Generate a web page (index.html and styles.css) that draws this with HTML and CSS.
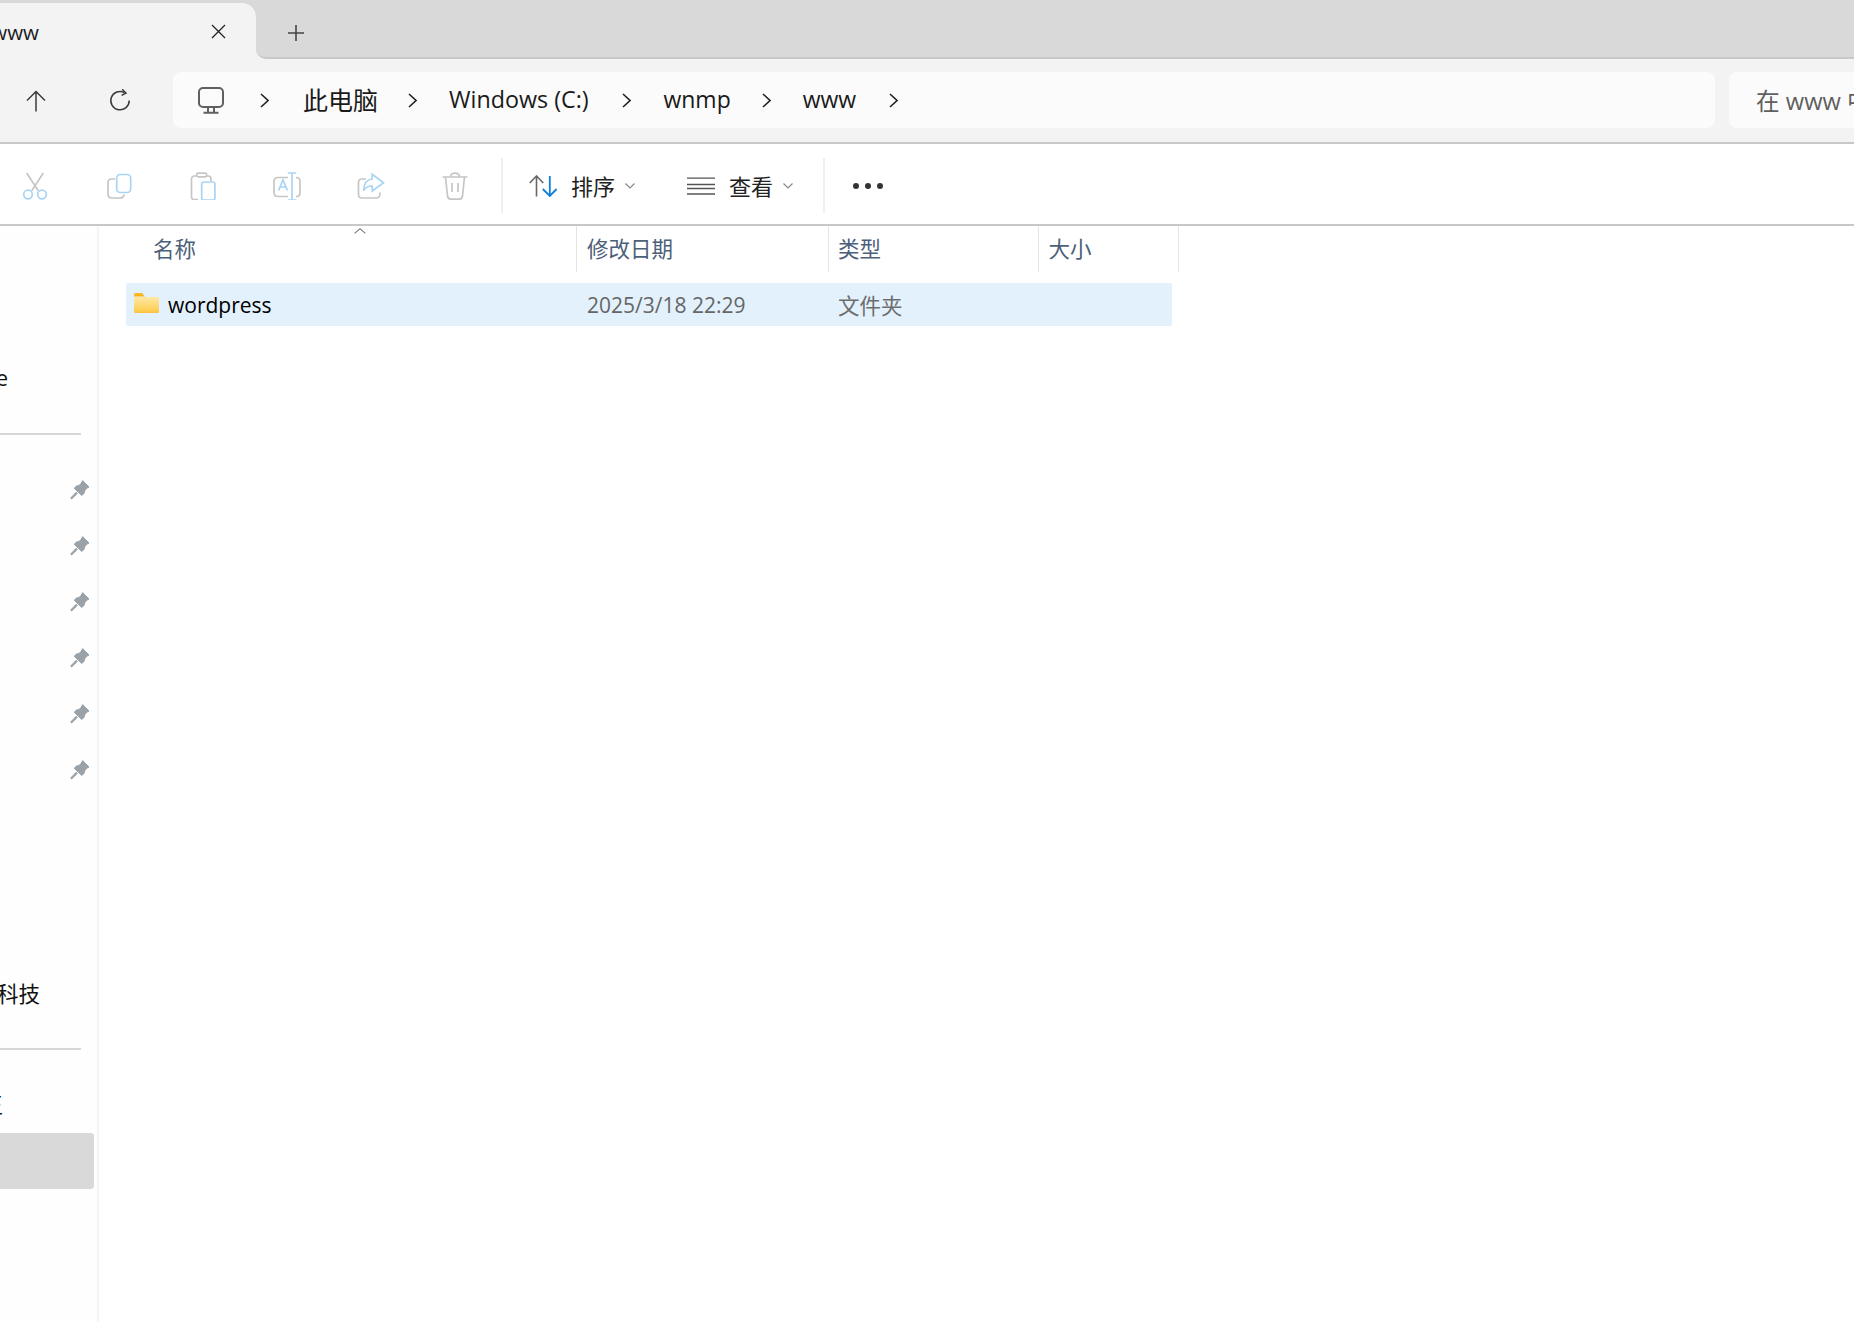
FILE: index.html
```html
<!DOCTYPE html>
<html lang="zh-CN">
<head>
<meta charset="utf-8">
<title>www</title>
<link rel="stylesheet" href="styles.css">
</head>
<body>
<div class="window">
  <div class="tabbar">
    <div class="tab">
      <span class="clip-left tab-title">www</span>
      <svg class="tab-close" width="15" height="15" viewBox="0 0 15 15"><path d="M1 1L14 14M14 1L1 14"/></svg>
    </div>
    <div class="tab-rest">
      <svg class="tab-plus" width="18" height="18" viewBox="0 0 18 18"><path d="M9 1V17M1 9H17"/></svg>
    </div>
  </div>

  <div class="navbar">
    <svg class="nav-up" width="20" height="22" viewBox="0 0 20 22"><path d="M10 21.5V1.5M1 10.5L10 1.5L19 10.5"/></svg>
    <svg class="nav-refresh" width="22" height="24" viewBox="0 0 22 24"><path d="M15.5 4.6A9.2 9.2 0 1 0 20.2 12.5"/><path d="M13.2 1.2L17 5L12.6 7.4" /></svg>
    <div class="address">
      <svg class="pc-icon" width="26" height="27" viewBox="0 0 26 27"><rect x="1" y="1" width="24" height="19" rx="4"/><path d="M10 20V25.5M16 20V25.5M5.5 25.7H20.5"/></svg>
      <svg class="crumb-chev first" width="9" height="15" viewBox="0 0 9 15"><path d="M1 1L8 7.5L1 14"/></svg>
      <span class="crumb c-pc">此电脑</span>
      <svg class="crumb-chev" width="9" height="15" viewBox="0 0 9 15"><path d="M1 1L8 7.5L1 14"/></svg>
      <span class="crumb c-win">Windows (C:)</span>
      <svg class="crumb-chev" width="9" height="15" viewBox="0 0 9 15"><path d="M1 1L8 7.5L1 14"/></svg>
      <span class="crumb c-wnmp">wnmp</span>
      <svg class="crumb-chev" width="9" height="15" viewBox="0 0 9 15"><path d="M1 1L8 7.5L1 14"/></svg>
      <span class="crumb c-www">www</span>
      <svg class="crumb-chev" width="9" height="15" viewBox="0 0 9 15"><path d="M1 1L8 7.5L1 14"/></svg>
    </div>
    <div class="search">在 www 中搜索</div>
  </div>

  <div class="toolbar">
    <button class="tool" aria-label="剪切">
      <svg width="28" height="28" viewBox="0 0 28 28"><path class="g" d="M5.7 1L17.3 18.7M22.3 1L10.7 18.7"/><circle class="b" cx="7" cy="22.5" r="4.3"/><circle class="b" cx="21" cy="22.5" r="4.3"/></svg>
    </button>
    <button class="tool" aria-label="复制">
      <svg width="28" height="28" viewBox="0 0 28 28"><path class="g" d="M10 7H6.5Q3 7 3 11V22Q3 26 7 26H15Q18.5 26 19.2 22.5"/><rect class="b" x="11.7" y="2.5" width="14" height="18" rx="3.5"/></svg>
    </button>
    <button class="tool" aria-label="粘贴">
      <svg width="28" height="28" viewBox="0 0 28 28"><path class="g" d="M7.5 4H5.5Q2.5 4 2.5 7V25Q2.5 27.5 5 27.5H9M18 4H19Q22 4 22 7V9"/><rect class="g" x="7.7" y="1.2" width="10" height="3.6" rx="1.6"/><rect class="b" x="12.7" y="10" width="13.2" height="18" rx="2"/></svg>
    </button>
    <button class="tool" aria-label="重命名">
      <svg width="28" height="28" viewBox="0 0 28 28"><path class="g" d="M15 5.5H5Q1 5.5 1 9.5V20.5Q1 24.5 5 24.5H15M23 5.5H23.5Q27 5.5 27 9.5V20.5Q27 24.5 23.5 24.5H23"/><path class="b" d="M19 1V28M14.7 1H23.3M14.7 28H23.3M5.5 18.5L10 8L14.5 18.5M7 15H13"/></svg>
    </button>
    <button class="tool" aria-label="共享">
      <svg width="28" height="28" viewBox="0 0 28 28"><path class="g" d="M9 7H5Q1.5 7 1.5 10.5V22.5Q1.5 26 5 26H19Q22.5 26 23 22.5V20.5"/><path class="b" d="M6.5 18.7C7 12 10 7.2 15.2 7V2.2L26.5 10.7L15.2 19V14C11 14 8 16 6.5 18.7Z"/></svg>
    </button>
    <button class="tool" aria-label="删除">
      <svg width="28" height="28" viewBox="0 0 28 28"><path class="g" d="M1.5 5H26.5M9.5 5Q9.5 1.2 14 1.2Q18.5 1.2 18.5 5M4.5 5L6.5 24Q7 27.2 10 27.2H18Q21 27.2 21.5 24L23.5 5M11 11V20M17 11V20"/></svg>
    </button>
    <span class="tool-sep"></span>
    <div class="menu menu-sort">
      <svg width="28" height="22" viewBox="0 0 28 22"><path class="ar-g" d="M7.5 21.5V1M.7 8L7.5 1L14.3 8"/><path class="ar-b" d="M20.8 1V21M13.8 14L20.8 21L27.6 14"/></svg>
      <span class="menu-label">排序</span>
      <svg class="menu-chev" width="10" height="6" viewBox="0 0 10 6"><path d="M.5.5L5 5L9.5.5"/></svg>
    </div>
    <div class="menu menu-view">
      <svg width="28" height="18" viewBox="0 0 28 18"><path d="M0 1.2H28M0 7.5H28M0 11.5H28M0 17H28"/></svg>
      <span class="menu-label">查看</span>
      <svg class="menu-chev" width="10" height="6" viewBox="0 0 10 6"><path d="M.5.5L5 5L9.5.5"/></svg>
    </div>
    <span class="tool-sep sep-2"></span>
    <div class="more"><i></i><i></i><i></i></div>
  </div>

  <div class="body">
    <aside class="sidebar">
      <div class="side-row"><span class="clip-left w-e">OneDrive</span></div>
      <div class="side-div"></div>
      <div class="side-row pinned"><svg class="pin" width="20" height="20" viewBox="0 0 20 20"><use href="#pin"/></svg></div>
      <div class="side-row pinned"><svg class="pin" width="20" height="20" viewBox="0 0 20 20"><use href="#pin"/></svg></div>
      <div class="side-row pinned"><svg class="pin" width="20" height="20" viewBox="0 0 20 20"><use href="#pin"/></svg></div>
      <div class="side-row pinned"><svg class="pin" width="20" height="20" viewBox="0 0 20 20"><use href="#pin"/></svg></div>
      <div class="side-row pinned"><svg class="pin" width="20" height="20" viewBox="0 0 20 20"><use href="#pin"/></svg></div>
      <div class="side-row pinned"><svg class="pin" width="20" height="20" viewBox="0 0 20 20"><use href="#pin"/></svg></div>
      <div class="side-row"></div>
      <div class="side-row"></div>
      <div class="side-row"></div>
      <div class="side-row"><span class="clip-left w-tech">科技</span></div>
      <div class="side-div"></div>
      <div class="side-row"><span class="clip-left w-lib">王</span></div>
      <div class="side-row selected"></div>
    </aside>

    <main class="files">
      <div class="head">
        <div class="col col-name">名称<svg class="sort-caret" width="12" height="6" viewBox="0 0 12 6"><path d="M.7 5.3L6 .7L11.3 5.3"/></svg></div>
        <div class="col col-date">修改日期</div>
        <div class="col col-type">类型</div>
        <div class="col col-size">大小</div>
      </div>
      <div class="row">
        <div class="cell-name">
          <svg class="folder" width="25" height="20" viewBox="0 0 25 20">
            <defs><linearGradient id="fg" x1="0" y1="0" x2="0" y2="1"><stop offset="0" stop-color="#ffe8a6"/><stop offset=".75" stop-color="#fdd35f"/><stop offset="1" stop-color="#fbc13a"/></linearGradient></defs>
            <path d="M0 1.5Q0 0 1.5 0H8L11 3.5H0Z" fill="#fab81e"/>
            <path d="M0 4H23.5Q25 4 25 5.5V18.5Q25 20 23.5 20H1.5Q0 20 0 18.5Z" fill="url(#fg)"/>
          </svg>
          <span>wordpress</span>
        </div>
        <div class="cell-date">2025/3/18 22:29</div>
        <div class="cell-type">文件夹</div>
      </div>
    </main>
  </div>

  <svg class="defs" width="0" height="0"><defs><g id="pin"><path d="M12.7 .6L19 7L16.5 8.5L14.5 11L14 13.5L11.7 15.4L4.2 8.2L6.5 6L9 5.5L11.2 3.2Z" fill="#99a2a8" stroke="#99a2a8" stroke-width="1" stroke-linejoin="round"/><path d="M.9 18.7L7 12.6" stroke="#99a2a8" stroke-width="2.2" fill="none"/></g></defs></svg>
</div>
</body>
</html>
```

FILE: styles.css
```css
* { box-sizing: border-box; }
html, body { margin: 0; padding: 0; }
body {
  width: 1854px;
  height: 1322px;
  overflow: hidden;
  background: #fff;
  font-family: "Open Sans", "Noto Sans CJK SC", sans-serif;
  color: #1a1a1a;
}
svg { display: block; flex: none; fill: none; }
.window { width: 1854px; height: 1322px; display: flex; flex-direction: column; overflow: hidden; position: relative; }
.defs { position: absolute; }

.clip-left { display: flex; justify-content: flex-end; white-space: nowrap; flex: none; }

/* tab strip */
.tabbar {
  height: 59px;
  display: flex;
  background: linear-gradient(#d9d9d9 0 48px, #f3f3f3 48px);
  flex: none;
}
.tab {
  width: 256px;
  margin-top: 3px;
  background: #f3f3f3;
  border-top-right-radius: 14px;
  display: flex;
  align-items: center;
  padding-top: 2px;
}
.tab-title { width: 39px; font-size: 20.5px; }
.tab-close { margin-left: 172px; margin-top: -2px; stroke: #222; stroke-width: 1.3; }
.tab-rest {
  flex: 1;
  background: #d9d9d9;
  border-bottom: 2px solid #c8c8c8;
  border-bottom-left-radius: 10px;
  display: flex;
  align-items: center;
}
.tab-plus { margin-left: 31px; stroke: #444; stroke-width: 1.6; margin-top: 9px; }

/* navigation */
.navbar {
  height: 85px;
  flex: none;
  background: #f3f3f3;
  border-bottom: 2px solid #c8c8c8;
  display: flex;
  align-items: center;
  overflow: hidden;
  padding-bottom: 1px;
}
.nav-up { margin-left: 26px; stroke: #3c3c3c; stroke-width: 1.5; margin-top: 2px; }
.nav-refresh { margin-left: 63px; stroke: #3c3c3c; stroke-width: 1.5; }
.address {
  margin-left: 42px;
  width: 1542px;
  height: 56px;
  flex: none;
  background: #fbfbfb;
  border-radius: 8px;
  display: flex;
  align-items: center;
}
.pc-icon { margin-left: 25px; stroke: #606060; stroke-width: 2; margin-top: 1px; }
.crumb-chev { stroke: #222; stroke-width: 1.6; margin-top: 1px; }
.crumb-chev.first { margin-left: 36px; }
.crumb { font-size: 23px; white-space: nowrap; margin-top: -2px; }
.c-pc { margin-left: 34px; margin-right: 29.5px; font-size: 25px; }
.c-win { margin-left: 32.5px; margin-right: 33.7px; font-size: 23.3px; }
.c-wnmp { margin-left: 32px; margin-right: 31px; }
.c-www { margin-left: 32px; margin-right: 33px; }
.search {
  margin-left: 14px;
  width: 240px;
  height: 56px;
  flex: none;
  background: #fbfbfb;
  border-radius: 8px 0 0 8px;
  padding-left: 27px;
  font-size: 23.7px;
  line-height: 58px;
  color: #5f5f5f;
  white-space: nowrap;
  overflow: hidden;
}

/* command bar */
.toolbar {
  height: 82px;
  flex: none;
  background: #fff;
  border-bottom: 2px solid #c8c8c8;
  display: flex;
  align-items: center;
  padding-top: 3px;
}
.tool {
  width: 84px;
  height: 56px;
  margin: 0;
  padding: 0;
  background: none;
  border: 0;
  display: flex;
  align-items: center;
  justify-content: center;
  flex: none;
}
.tool:first-child { margin-left: -7px; }
.tool .g { stroke: #c6c6c6; stroke-width: 1.7; }
.tool .b { stroke: #a9d5f5; stroke-width: 1.7; }
.tool-sep { width: 2px; height: 55px; background: #efefef; margin-left: 4px; flex: none; }
.menu { display: flex; align-items: center; flex: none; }
.menu-sort { margin-left: 26px; }
.menu-view { margin-left: 52.5px; }
.menu-view svg:first-child { stroke: #555; stroke-width: 1.3; }
.ar-g { stroke: #666; stroke-width: 1.6; }
.ar-b { stroke: #0f7fd9; stroke-width: 1.8; }
.menu-label { margin-left: 14px; font-size: 22px; color: #222; line-height: 1; }
.menu-chev { margin-left: 9.5px; stroke: #888; stroke-width: 1.2; }
.sep-2 { margin-left: 30px; }
.more { margin-left: 28px; display: flex; gap: 6px; flex: none; }
.more i { width: 6px; height: 6px; border-radius: 50%; background: #333; }

/* body */
.body { flex: 1; display: flex; min-height: 0; }
.sidebar {
  width: 99px;
  flex: none;
  background: #fefefe;
  border-right: 2px solid #f5f5f5;
  padding-top: 125px;
  overflow: hidden;
}
.side-row { height: 56px; width: 94px; display: flex; align-items: center; font-size: 21.5px; color: #111; }
.side-row .clip-left { margin-top: -3px; }
.side-row.pinned { justify-content: flex-end; padding-right: 4px; }
.side-row.selected { background: #d9d9d9; border-radius: 0 3px 3px 0; }
.side-div { width: 81px; height: 2px; background: #d7d7d7; margin: 26px 0 27px; }
.w-e { width: 8px; }
.w-tech { width: 40px; }
.w-lib { width: 3px; }

.files { flex: 1; min-width: 0; background: #fff; }
.head { height: 46px; display: flex; }
.col {
  height: 46px;
  border-right: 1px solid #e5e5e5;
  font-size: 21.5px;
  line-height: 46px;
  color: #4c6079;
  flex: none;
  position: relative;
}
.col-name { width: 478px; padding-left: 54px; }
.col-date { width: 252px; padding-left: 10px; }
.col-type { width: 210px; padding-left: 9px; }
.col-size { width: 140px; padding-left: 9.5px; }
.sort-caret { position: absolute; left: 255px; top: 2px; stroke: #777; stroke-width: 1.1; }

.row {
  margin: 11px 0 0 27px;
  width: 1046px;
  height: 43px;
  display: flex;
  align-items: center;
  background: #e2f1fc;
  border-radius: 2px;
}
.cell-name { width: 461px; padding-left: 8px; display: flex; align-items: center; font-size: 21px; color: #000; flex: none; }
.cell-name span { margin-left: 9px; }
.folder { margin-top: -3px; }
.cell-date { width: 251px; font-size: 21px; color: #666; flex: none; }
.cell-type { font-size: 21.5px; color: #6d6d6d; flex: none; }
```
